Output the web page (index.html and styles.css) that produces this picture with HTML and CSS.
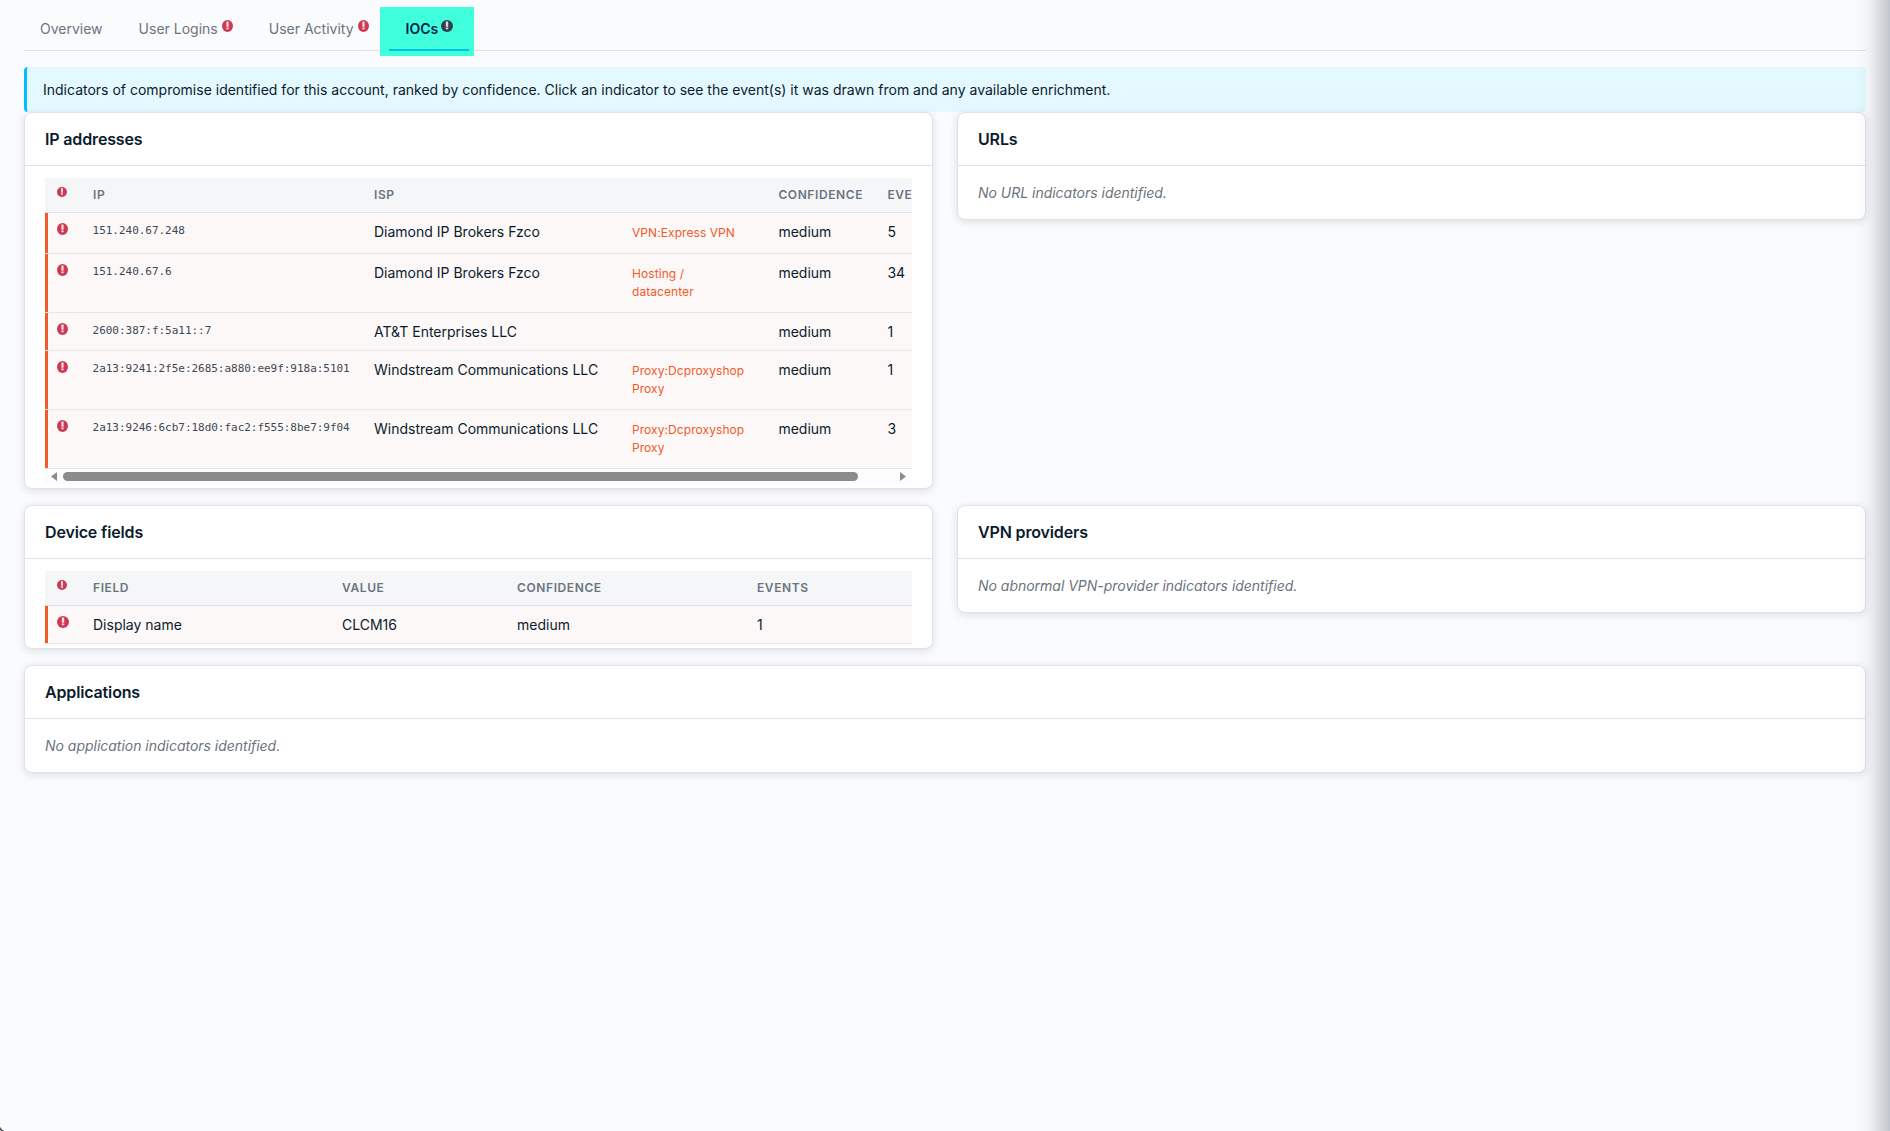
FILE: index.html
```html
<!DOCTYPE html>
<html lang="en">
<head>
<meta charset="utf-8">
<title>Account indicators</title>
<link rel="stylesheet" href="styles.css">
</head>
<body>
<svg class="defs" width="0" height="0" aria-hidden="true">
  <symbol id="alert" viewBox="0 0 12 12" preserveAspectRatio="none">
    <circle cx="6" cy="6" r="6" fill="currentColor"/>
    <path d="M4.8 1.6h2.4v5.2H4.8zM4.8 7.5h2.4v1.8H4.8z" fill="#fff" fill-opacity=".82"/>
  </symbol>
</svg>
<main class="page">
  <nav class="tabs">
    <a class="tab">Overview</a>
    <a class="tab">User Logins<svg class="flag"><use href="#alert"/></svg></a>
    <a class="tab">User Activity<svg class="flag"><use href="#alert"/></svg></a>
    <a class="tab active">IOCs<svg class="flag"><use href="#alert"/></svg></a>
  </nav>
  <p class="notice">Indicators of compromise identified for this account, ranked by confidence. Click an indicator to see the event(s) it was drawn from and any available enrichment.</p>
  <div class="grid">
    <section class="card">
      <h2>IP addresses</h2>
      <div class="table-body">
        <div class="scroller">
          <table class="ip-table">
            <colgroup><col class="w36"><col class="w281"><col class="w258"><col class="w147"><col class="w109"><col class="w76"></colgroup>
            <thead><tr><th><svg class="mark small"><use href="#alert"/></svg></th><th>IP</th><th>ISP</th><th></th><th>Confidence</th><th>Events</th></tr></thead>
            <tbody>
              <tr class="mid"><td><svg class="mark"><use href="#alert"/></svg></td><td class="mono">151.240.67.248</td><td>Diamond IP Brokers Fzco</td><td class="tag">VPN:Express VPN</td><td>medium</td><td>5</td></tr>
              <tr class="tall"><td><svg class="mark"><use href="#alert"/></svg></td><td class="mono">151.240.67.6</td><td>Diamond IP Brokers Fzco</td><td class="tag">Hosting /<br>datacenter</td><td>medium</td><td>34</td></tr>
              <tr><td><svg class="mark"><use href="#alert"/></svg></td><td class="mono">2600:387:f:5a11::7</td><td>AT&amp;T Enterprises LLC</td><td></td><td>medium</td><td>1</td></tr>
              <tr class="tall"><td><svg class="mark"><use href="#alert"/></svg></td><td class="mono">2a13:9241:2f5e:2685:a880:ee9f:918a:5101</td><td>Windstream Communications LLC</td><td class="tag">Proxy:Dcproxyshop<br>Proxy</td><td>medium</td><td>1</td></tr>
              <tr class="tall"><td><svg class="mark"><use href="#alert"/></svg></td><td class="mono">2a13:9246:6cb7:18d0:fac2:f555:8be7:9f04</td><td>Windstream Communications LLC</td><td class="tag">Proxy:Dcproxyshop<br>Proxy</td><td>medium</td><td>3</td></tr>
            </tbody>
          </table>
        </div>
        <div class="scrollbar">
          <svg width="6" height="9" viewBox="0 0 6 9"><path d="M6 0v9L0 4.5z" fill="currentColor"/></svg>
          <span class="thumb"></span>
          <svg width="6" height="9" viewBox="0 0 6 9"><path d="M0 0v9l6-4.5z" fill="currentColor"/></svg>
        </div>
      </div>
    </section>
    <section class="card">
      <h2>URLs</h2>
      <p class="empty">No URL indicators identified.</p>
    </section>
    <section class="card">
      <h2>Device fields</h2>
      <div class="table-body">
        <table class="device-table">
          <colgroup><col class="w36"><col class="w249"><col class="w175"><col class="w240"><col></colgroup>
          <thead><tr><th><svg class="mark small"><use href="#alert"/></svg></th><th>Field</th><th>Value</th><th>Confidence</th><th>Events</th></tr></thead>
          <tbody><tr><td><svg class="mark round"><use href="#alert"/></svg></td><td>Display name</td><td>CLCM16</td><td>medium</td><td>1</td></tr></tbody>
        </table>
      </div>
    </section>
    <section class="card">
      <h2>VPN providers</h2>
      <p class="empty">No abnormal VPN-provider indicators identified.</p>
    </section>
    <section class="card wide">
      <h2>Applications</h2>
      <p class="empty">No application indicators identified.</p>
    </section>
  </div>
</main>
<div class="edge-shade"></div>
<div class="corner"></div>
</body>
</html>
```
FILE: styles.css
```css
* { box-sizing: border-box; }
body {
  margin: 0;
  height: 1131px;
  overflow: hidden;
  position: relative;
  background: #fafbfd;
  color: #0b1b2d;
  font: 14px/20px Inter, "Liberation Sans", sans-serif;
}
.defs { display: block; }
.page { padding: 7px 24px 0; }

.tabs {
  display: flex;
  height: 60px;
  padding-left: 1px;
  background: linear-gradient(#dfe1e5, #dfe1e5) 0 43px / 100% 1px no-repeat;
}
.tab {
  height: 44px;
  padding: 12px 15px 0;
  margin-right: 6px;
  color: #6b747d;
  white-space: nowrap;
}
.tab .flag { width: 11px; height: 12px; margin-left: 4px; vertical-align: 2px; color: #cc3a55; }
.tab.active {
  width: 94px;
  height: 49px;
  margin-left: -10px;
  padding-left: 26px;
  padding-right: 0;
  font-weight: 600;
  color: #00204c;
  background: linear-gradient(#00c2dd, #00c2dd) 9px 42px / 80px 2px no-repeat, #40ffdd;
}
.tab.active .flag { width: 12px; margin-left: 3px; color: #33404f; }

.notice {
  margin: 0;
  height: 45px;
  padding: 13px 16px 0;
  border-left: 3px solid #00bfff;
  border-radius: 4px;
  background: #e4f8ff;
}

.grid {
  display: grid;
  grid-template-columns: 1fr 1fr;
  gap: 16px 24px;
  align-items: start;
}
.card {
  min-width: 0;
  border: 1px solid #dfe2e6;
  border-radius: 8px;
  background: #fff;
  box-shadow: 0 2px 8px rgba(11, 27, 45, .12);
}
.card.wide { grid-column: 1 / -1; }
.card h2 {
  margin: 0;
  height: 53px;
  padding: 16px 20px 0;
  border-bottom: 1px solid #dfe2e6;
  font-size: 16px;
  line-height: 20px;
  font-weight: 600;
  letter-spacing: -.15px;
}
.empty { margin: 0; height: 53px; padding: 17px 20px 0; font-style: italic; letter-spacing: -.02px; color: #6b747d; }

.table-body { padding: 12px 20px 4px; }
.scroller { overflow: hidden; }
table { border-collapse: separate; border-spacing: 0; table-layout: fixed; width: 100%; }
.ip-table { width: 906px; }
.w36 { width: 36px; }
.w281 { width: 281px; }
.w258 { width: 258px; }
.w147 { width: 146.4px; }
.w109 { width: 109px; }
.w76 { width: 76px; }
.w249 { width: 249px; }
.w175 { width: 175px; }
.w240 { width: 240px; }
th, td { padding: 0 12px; text-align: left; vertical-align: top; white-space: nowrap; }
th {
  height: 35px;
  padding-top: 7px;
  background: #f4f6f8;
  border-bottom: 1px solid #dfe2e6;
  color: #6b747d;
  font-size: 12px;
  font-weight: 600;
  letter-spacing: .6px;
  text-transform: uppercase;
}
td { height: 38px; padding-top: 9px; background: #fcf8f7; border-bottom: 1px solid #e5e7ea; }
.mid td { height: 41px; }
.tall td { height: 59px; }
th:first-child, td:first-child { padding-right: 0; }
td:first-child { box-shadow: inset 3px 0 #f15a29; }
.mark { display: block; width: 11px; height: 12px; margin-top: 1px; color: #cc3a55; }
.mark.round { width: 12px; }
.mark.small { width: 10px; height: 10px; margin-top: 2px; }
.mono { font: 11px/16px "DejaVu Sans Mono", monospace; letter-spacing: -.03px; color: #3d4854; padding-top: 10px; padding-left: 11.6px; }
.tag { font-size: 12px; line-height: 18px; letter-spacing: .07px; color: #f15a29; padding-top: 11px; }

.scrollbar {
  display: flex;
  align-items: center;
  height: 15px;
  padding: 0 6px;
  background: #fcfcfc;
  color: #8b8b8b;
}
.thumb { width: 795px; height: 9px; margin: 0 42px 0 6px; border-radius: 5px; background: #8b8b8b; }

.edge-shade {
  position: absolute;
  inset: 0 0 0 auto;
  width: 36px;
  background: linear-gradient(90deg, rgba(115, 128, 138, 0), rgba(115, 128, 138, .05) 35%, rgba(115, 128, 138, .15) 55%, rgba(115, 128, 138, .3) 80%, rgba(115, 122, 138, .42));
}
.corner {
  position: absolute;
  left: 0;
  bottom: 0;
  width: 7px;
  height: 7px;
  background: radial-gradient(circle at 100% 0, transparent 7px, #444 8px, #444 8.5px, #fff 9.5px);
}
```
